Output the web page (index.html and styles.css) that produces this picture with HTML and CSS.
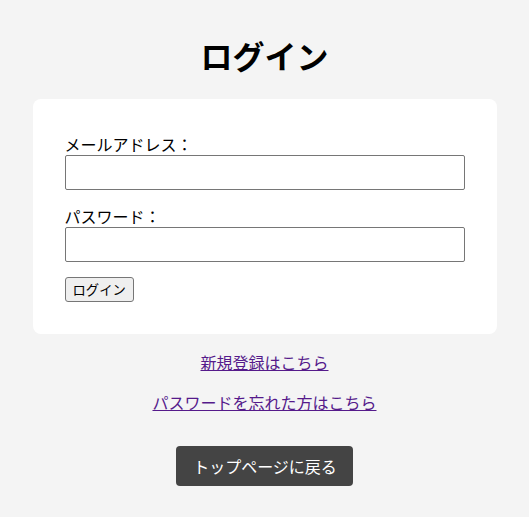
FILE: index.html
```html
<!DOCTYPE html>
<html lang="ja">
<head>
<meta charset="utf-8">
<title>ログイン</title>
<link rel="stylesheet" href="styles.css">
</head>
<body>
<main class="page">
  <h1 class="title">ログイン</h1>
  <form class="card">
    <label class="label" for="email">メールアドレス：</label>
    <input class="field" id="email" type="email">
    <label class="label" for="password">パスワード：</label>
    <input class="field" id="password" type="password">
    <button class="submit" type="button">ログイン</button>
  </form>
  <nav class="links">
    <a class="link" href="#">新規登録はこちら</a>
    <a class="link" href="#">パスワードを忘れた方はこちら</a>
  </nav>
  <div class="back-wrap">
    <a class="back" href="#">トップページに戻る</a>
  </div>
</main>
</body>
</html>
```

FILE: styles.css
```css
html, body {
  margin: 0;
  padding: 0;
}
body {
  background: #f4f4f4;
  font-family: "Noto Sans CJK JP", "Noto Sans", sans-serif;
  color: #000;
}
.page {
  display: flex;
  flex-direction: column;
  align-items: center;
  padding-top: 32px;
}
.title {
  margin: 0 0 21px;
  font-size: 32px;
  line-height: 46px;
  font-weight: 700;
}
.card {
  box-sizing: border-box;
  width: 464px;
  background: #fff;
  border-radius: 8px;
  padding: 34px 32px 32px;
  display: flex;
  flex-direction: column;
  align-items: flex-start;
}
.label {
  font-size: 16px;
  line-height: 22px;
}
.field {
  box-sizing: border-box;
  width: 400px;
  height: 35px;
  margin: 0 0 15px;
  border: 1px solid #767676;
  border-radius: 2px;
  background: #fff;
}
.submit {
  font-family: "Noto Sans CJK JP", sans-serif;
  font-size: 13.33px;
  line-height: 19px;
  height: 25px;
  padding: 1px 7px;
  background: #efefef;
  border: 1px solid #767676;
  border-radius: 3px;
  color: #000;
}
.links {
  display: flex;
  flex-direction: column;
  align-items: center;
  gap: 17px;
  margin-top: 17px;
}
.link {
  font-size: 16px;
  line-height: 23px;
  color: #551a8b;
  text-decoration: underline;
}
.back-wrap {
  margin-top: 32px;
}
.back {
  display: inline-block;
  background: #444;
  color: #fff;
  text-decoration: none;
  font-size: 16px;
  line-height: 24px;
  padding: 8px 16px 8px 17px;
  border-radius: 4px;
}
```
